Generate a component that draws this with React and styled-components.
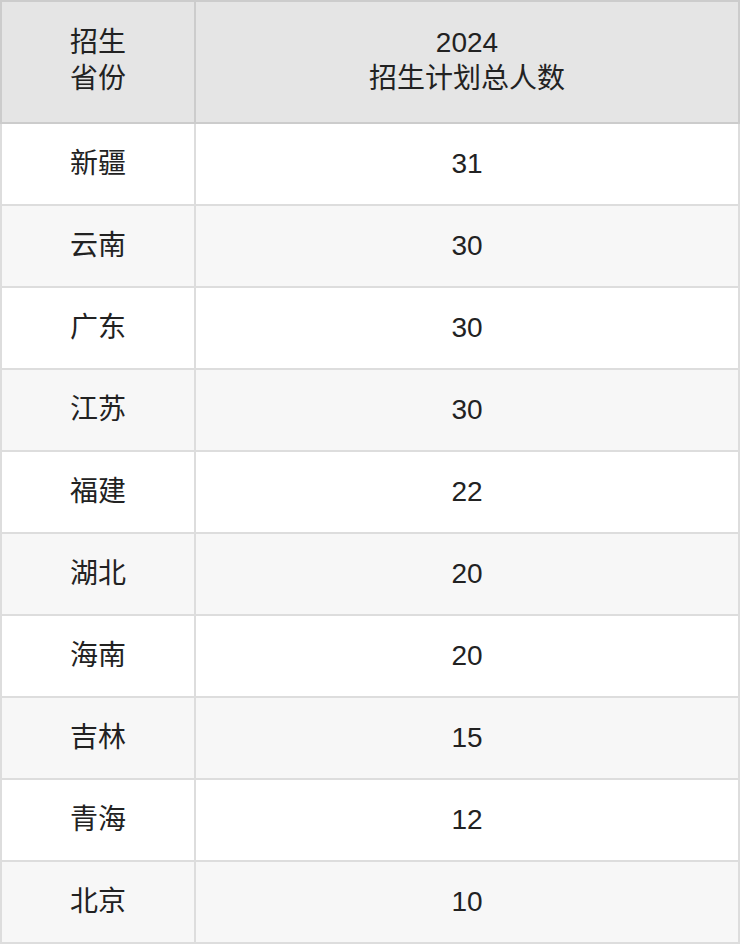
import { Fragment } from "react"
import styled, { createGlobalStyle } from "styled-components"

const GlobalStyle = createGlobalStyle`
    html, body {
        margin: 0;
        padding: 0;
        background: #ffffff;
    }
    body {
        font-family: "Liberation Sans", "Noto Sans CJK SC", sans-serif;
        color: #222222;
    }
`

const Table = styled.div`
    width: 740px;
    display: grid;
    grid-template-columns: 196px 544px;
    box-sizing: border-box;
`

const Cell = styled.div`
    box-sizing: border-box;
    display: flex;
    flex-direction: column;
    justify-content: center;
    align-items: center;
    text-align: center;
    font-size: 28px;
    line-height: 36px;
    padding-bottom: ${p => (p.$head ? "2px" : "0")};
    border-right: 2px solid ${p => (p.$head ? "#cccccc" : "#dddddd")};
    border-bottom: 2px solid ${p => (p.$head ? "#cccccc" : "#dddddd")};
    border-left: ${p => (p.$first ? `2px solid ${p.$head ? "#cccccc" : "#dddddd"}` : "none")};
    border-top: ${p => (p.$head ? "2px solid #cccccc" : "none")};
    height: ${p => (p.$head ? "124px" : "82px")};
    background: ${p => (p.$head ? "#e5e5e5" : p.$alt ? "#f7f7f7" : "#ffffff")};
`

const rows = [
    ["新疆", 31],
    ["云南", 30],
    ["广东", 30],
    ["江苏", 30],
    ["福建", 22],
    ["湖北", 20],
    ["海南", 20],
    ["吉林", 15],
    ["青海", 12],
    ["北京", 10],
]

const App = () => {
    return (
        <>
            <GlobalStyle />
            <Table>
                <Cell $head $first>
                    <span>招生</span>
                    <span>省份</span>
                </Cell>
                <Cell $head>
                    <span>2024</span>
                    <span>招生计划总人数</span>
                </Cell>
                {rows.map(([prov, num], i) => (
                    <Fragment key={prov}>
                        <Cell $first $alt={i % 2 === 1}>{prov}</Cell>
                        <Cell $alt={i % 2 === 1}>{num}</Cell>
                    </Fragment>
                ))}
            </Table>
        </>
    )
}

export default App
